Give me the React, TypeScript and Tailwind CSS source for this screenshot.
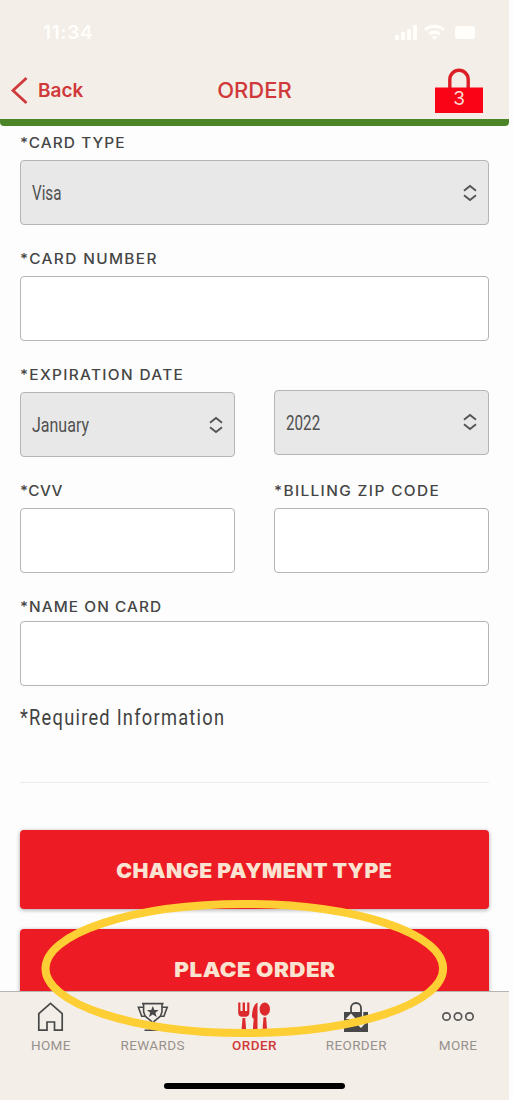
import React from 'react';

type SelectBoxProps = { value: string; scale: string };

const SelectBox: React.FC<SelectBoxProps> = ({ value, scale }) => (
  <div className="flex h-[65px] shrink-0 items-center justify-between rounded-[4px] border border-[#b5b5b5] bg-[#e8e8e8] pl-[11px] pr-[11px]">
    <span className={`mt-px inline-block origin-left text-[20px] text-[#505050] ${scale}`}>{value}</span>
    <svg width="14" height="18" viewBox="0 0 14 18" fill="none" stroke="#555" strokeWidth="1.9">
      <path d="M1 6.7 7 2l6 4.7M1 11.3 7 16l6-4.7" />
    </svg>
  </div>
);

const InputBox: React.FC = () => (
  <div className="h-[65px] shrink-0 rounded-[4px] border border-[#b5b5b5] bg-white" />
);

const Label: React.FC<{ children: string; className: string }> = ({ children, className }) => (
  <div className={`flex h-[34px] shrink-0 origin-left scale-x-[1.1] items-center whitespace-nowrap pb-0.5 font-[Inter] text-[14px] font-medium text-[#454545] ${className}`}>
    {children}
  </div>
);

const RedButton: React.FC<{ children: string; className: string; scale: string }> = ({ children, className, scale }) => (
  <button className={`h-[79px] shrink-0 rounded-[4px] bg-[#ed1b23] font-[Inter] text-[20px] font-black text-[#fbe3d2] shadow-[0_1px_4px_rgba(0,0,0,0.35)] ${className}`}>
    <span className={`mt-0.5 inline-block tracking-[0.4px] ${scale}`}>{children}</span>
  </button>
);

const HomeIcon = () => (
  <svg width="30" height="32" viewBox="0 0 30 32" fill="none" stroke="#484848" strokeWidth="1.7">
    <path d="M2.8 29.2V12.7L14.5 2.3l11.7 10.4v16.5h-7.7v-8.2h-7.5v8.2z" />
  </svg>
);

const TrophyIcon = () => (
  <svg width="32" height="32" viewBox="0 0 32 32" fill="none" stroke="#484848" strokeWidth="1.6">
    <path d="M5 2.6h21.6M6.6 2.6v8.2l1.6 4.4 6.4 5.2v4l-2 4.4M25 2.6v8.2l-1.6 4.4-6.4 5.2v4l2 4.4M7.5 29.3H24" />
    <path d="M6.5 6.3H1.4l3.3 8.9h3.6M25 6.3h5.2l-3.3 8.9h-3.6" />
    <path fill="#484848" stroke="none" d="m15.8 5 1.6 3.9h4.3l-3.3 2.8 1.3 4.2-3.9-2.5-3.9 2.5 1.3-4.2-3.3-2.8h4.3z" />
  </svg>
);

const CutleryIcon = () => (
  <svg width="34" height="32" viewBox="0 0 34 32" fill="#dc2a2d">
    <path d="M1.2 1.6h2.2v8.4h2.2V1.6h2.4v8.4h2.2V1.6h2.2v10.2c0 2.2-1.3 3.5-3.2 4H4.4c-1.9-.5-3.2-1.8-3.2-4zM5.5 17h2.7l1 12.3H4.500z" />
    <path d="M20.500 1.400v27.900h-4.700l.9-11.500c-1.400-.6-1.900-1.800-1.700-3.800.4-6 1.800-10.800 5.500-12.600z" />
    <ellipse cx="27.8" cy="8.2" rx="5.2" ry="6.6" />
    <path d="M26.500 16.300h2.600l1 13h-4.600z" />
  </svg>
);

const ReorderIcon = () => (
  <svg width="26" height="32" viewBox="0 0 26 32">
    <path fill="#484848" d="M1 11h24v20H1z" />
    <path d="M19.5 10.500v6" stroke="#f4eee8" strokeWidth="1.6" />
    <path d="M8 12V7a5 5 0 0 1 10 0V16" fill="none" stroke="#484848" strokeWidth="1.8" />
    <path fill="#f4eee8" d="m8 12.500 5 5.500h-3c.4 3.500 2.500 4.700 5.200 4.800-5 1.500-9-.5-9-4.800H2.500zM18 27l-5-5h3.200c-.3-2-.6-2.500-1.200-3 3-.5 4.600.5 4.700 3h3z" />
  </svg>
);

const MoreIcon = () => (
  <svg width="34" height="32" viewBox="0 0 34 32" fill="none" stroke="#555" strokeWidth="1.7">
    <circle cx="5.5" cy="15.5" r="3.7" />
    <circle cx="17" cy="15.5" r="3.7" />
    <circle cx="28.5" cy="15.5" r="3.7" />
  </svg>
);

const tabs = [
  { label: 'HOME', icon: <HomeIcon />, color: 'text-[#96918d]' },
  { label: 'REWARDS', icon: <TrophyIcon />, color: 'text-[#96918d]' },
  { label: 'ORDER', icon: <CutleryIcon />, color: 'font-medium text-[#d0393a]' },
  { label: 'REORDER', icon: <ReorderIcon />, color: 'text-[#96918d]' },
  { label: 'MORE', icon: <MoreIcon />, color: 'text-[#96918d]' },
];

const Header: React.FC = () => (
  <header className="h-[126px] shrink-0 rounded-b-[4px] border-b-[7px] border-[#4c8428] bg-[#f4eee8]">
    <div className="flex h-[64px] items-center justify-between pl-[43px] pr-[31px]">
      <span className="mt-0.5 font-[Inter] text-[19px] font-semibold tracking-[0.7px] text-[#fffefb]">11:34</span>
      <svg width="84" height="18" viewBox="0 0 84 18" fill="#fffefb">
        <rect x="1" y="12" width="4" height="5" rx="1" />
        <rect x="7" y="9" width="4" height="8" rx="1" />
        <rect x="13" y="6" width="4" height="11" rx="1" />
        <rect x="19" y="2" width="4" height="15" rx="1" />
        <path d="M30 5.7c6-5.3 15-5.3 21 0L49 8c-5-4.300-12-4.300-17 0zM34 10c4-3.300 9-3.300 13 0l-2 2.300c-3-2-6-2-9 0zM38 14c2-1.500 3-1.500 5 0l-2.500 3z" />
        <rect x="61" y="3" width="20" height="13" rx="2.5" />
      </svg>
    </div>
    <div className="grid h-[53px] grid-cols-3 items-center font-[Inter] text-[#d0393a]">
      <div className="flex items-center gap-[10px] pl-[10px]">
        <svg width="18" height="28" viewBox="0 0 18 28" fill="none" stroke="#d0393a" strokeWidth="2.8">
          <path d="M16.5 1 3 13.5l13.5 12.5" />
        </svg>
        <span className="mt-0.5 text-[19px] font-semibold">Back</span>
      </div>
      <h1 className="text-center text-[22px] font-medium">ORDER</h1>
      <svg className="mr-[26px] justify-self-end" width="48" height="46" viewBox="0 0 48 46">
        <path d="M14.8 20V11.5a9.2 9.2 0 0 1 18.4 0V20" fill="none" stroke="#dc1f27" strokeWidth="3.4" />
        <path d="M0 19.5h48V45H0z" fill="#fb0316" />
        <text x="24" y="37" textAnchor="middle" className="font-[Inter] text-[19px]" fill="#f8dcd4">3</text>
      </svg>
    </div>
  </header>
);

const App: React.FC = () => {
  return (
    <div className="h-[1100px] w-[513px] overflow-hidden bg-[#fdfdfd] font-[Roboto]">
      <div className="relative flex h-full w-[509px] flex-col">
        <Header />

        <main className="flex h-[865px] flex-col overflow-hidden px-5">
          <Label className="tracking-[0.95px]">*CARD TYPE</Label>
          <SelectBox value="Visa" scale="scale-x-[0.76]" />
          <Label className="mt-[17px] tracking-[1.25px]">*CARD NUMBER</Label>
          <InputBox />
          <div className="mt-[17px] grid shrink-0 grid-cols-2 gap-x-[39px]">
            <div>
              <Label className="tracking-[1.2px]">*EXPIRATION DATE</Label>
              <SelectBox value="January" scale="scale-x-[0.8]" />
            </div>
            <div className="pt-[31.5px]">
              <SelectBox value="2022" scale="scale-x-[0.76]" />
            </div>
          </div>
          <div className="mt-[17px] grid shrink-0 grid-cols-2 gap-x-[39px]">
            <div>
              <Label className="tracking-[0.4px]">*CVV</Label>
              <InputBox />
            </div>
            <div>
              <Label className="tracking-[1.25px]">*BILLING ZIP CODE</Label>
              <InputBox />
            </div>
          </div>
          <Label className="-mb-[3px] mt-[17px] tracking-[0.95px]">*NAME ON CARD</Label>
          <InputBox />
          <p className="mt-[17px] h-[30px] shrink-0 origin-left scale-x-[0.83] whitespace-nowrap text-[22px] leading-[30px] tracking-[1.5px] text-[#424242]">
            *Required Information
          </p>
          <hr className="mt-[49px] border-[#ececec]" />
          <RedButton className="mt-[47px]" scale="scale-x-[1.06]">CHANGE PAYMENT TYPE</RedButton>
          <RedButton className="mt-5" scale="scale-x-[1.12]">PLACE ORDER</RedButton>
        </main>

        <nav className="flex h-[109px] shrink-0 flex-col items-center border-t border-[#b9b4b0] bg-[#f4eee8]">
          <div className="grid h-[91px] w-full grid-cols-5 pt-[9px]">
            {tabs.map((tab) => (
              <div key={tab.label} className={`flex flex-col items-center ${tab.color}`}>
                {tab.icon}
                <span className="mt-0.5 text-[13.5px] leading-5 tracking-[0.4px]">{tab.label}</span>
              </div>
            ))}
          </div>
          <div className="h-[6px] w-[181px] rounded-full bg-black" />
        </nav>

        {/* highlight drawn around the place order button */}
        <svg className="pointer-events-none absolute left-0 top-[890px]" width="509" height="160" viewBox="0 0 509 160" fill="none">
          <ellipse cx="244.3" cy="78.5" rx="198.8" ry="64.5" stroke="#fdcf34" strokeWidth="8" />
        </svg>
      </div>
    </div>
  );
};

export default App;
